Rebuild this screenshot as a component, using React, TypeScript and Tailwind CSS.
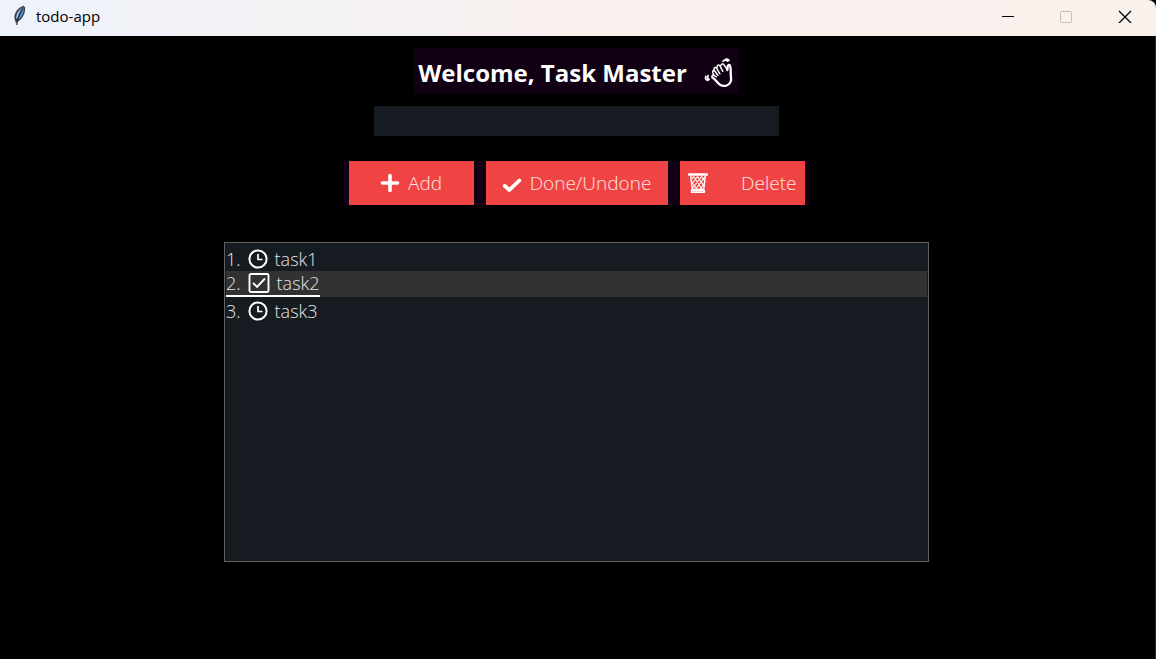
import { useState } from "react";

type Task = { name: string; done: boolean };

function FeatherIcon() {
  return (
    <svg width="16" height="22" viewBox="0 0 16 22" aria-hidden="true">
      <path d="M4 18.500 2.400 13C2.200 8 5.600 2.800 11.400.8l1.700 1.500c.3 5.500-1.800 10.800-6.200 13.600L5 17z" fill="#3a3f47" />
      <path d="M4.200 13.500C3.800 9.300 6.500 4.600 11 2.200L8.600 7.500 5.500 13.500z" fill="#9fc0e4" />
      <path d="M6 14.200 9 7.500l2.900-5c.3 4.600-1.500 9-5 11.700z" fill="#4a8ade" />
      <path d="M10.500 3.200C7.500 8 5.700 12.500 4.800 20" fill="none" stroke="#22262d" strokeWidth="1.200" />
    </svg>
  );
}

function WavingHand() {
  return (
    <svg width="32" height="32" viewBox="0 0 32 32" fill="none" stroke="#fff" strokeLinecap="round" strokeLinejoin="round" aria-hidden="true">
      <path d="M9.500 20.500c2.800 1.500 4.300 5 7.500 7.200 3.700 2.300 8.300 1.300 10.300-2.200 1.900-3.500.2-6.500.4-9.500.1-2.800.3-5-.7-7.200-.7-1.300-2.400-.9-2.400.7l-.2 3.500" strokeWidth="2.300" />
      <path d="M9.500 20.500c-1.300-1.200-.2-3 1.500-2.200l2.300 1.500M11 18.300l-1.300-2.800c-.6-1.700 1.300-2.500 2.300-1.200l2.800 4M11.200 13.800l-.2-1.500c-.2-2 1.900-2.500 2.700-1l3.200 5.500M13.900 11.500l.3-2.300c.4-1.600 2.300-1.500 2.900-.1l2.700 5.200M17.300 9.300l1-1.700c.9-1.100 2.400-.7 2.900.5l3.200 4.700" strokeWidth="1.500" />
      <path d="M20 4.300c1.200-1.500 3.300-1.500 4.700-.2M22 2.700c1.400-.8 2.900-.4 3.900.7M2.800 19.500c-.8 1.700 0 3.300 1.900 3.900M5 18.600c-.9 1.700-.4 3.100 1.100 4" strokeWidth="1.700" />
    </svg>
  );
}

function PlusIcon() {
  return (
    <svg width="20" height="20" viewBox="0 0 20 20" aria-hidden="true">
      <path d="M10 2.500v15M2.500 10h15" stroke="#fff" strokeWidth="3.600" strokeLinecap="round" />
    </svg>
  );
}

function CheckIcon() {
  return (
    <svg width="20" height="20" viewBox="0 0 20 20" aria-hidden="true">
      <path d="m2.800 12.800 4.600 4.200L17.300 7.500" fill="none" stroke="#fff" strokeWidth="3.800" strokeLinecap="round" strokeLinejoin="round" />
    </svg>
  );
}

function BasketIcon() {
  return (
    <svg width="20" height="22" viewBox="0 0 20 22" fill="none" stroke="#fff" strokeLinecap="round" strokeLinejoin="round" aria-hidden="true">
      <path d="M.8 1.800h18.400v1.400H.8z" strokeWidth="1.300" />
      <path d="m2.800 4.500 1.500 13h11.400l1.500-13M3.500 18.500h13v1.800h-13z" strokeWidth="1.400" />
      <path d="m3 8 2.600-3.500 8.600 13M3.500 12.500l6-8 6.500 9.500M4 17l9.500-12.500L17 9.500M7.500 17.500 16.800 5M12 17.500l4.300-6M3.300 9l5.500 8.500" strokeWidth="1.100" />
    </svg>
  );
}

function ClockIcon() {
  return (
    <svg width="20" height="20" viewBox="0 0 20 20" fill="none" stroke="#fff" aria-hidden="true">
      <circle cx="10" cy="10" r="8.600" strokeWidth="2" />
      <path d="M10 5v5.500h4.500" strokeWidth="1.700" />
    </svg>
  );
}

function TickedBoxIcon() {
  return (
    <svg width="22" height="20" viewBox="0 0 22 20" fill="none" stroke="#fff" strokeWidth="1.900" aria-hidden="true">
      <rect x="1.500" y="1" width="19" height="18" rx="1.500" />
      <path d="m5 9.800 4 4 8-8.300" />
    </svg>
  );
}

function TitleBar() {
  return (
    <header className="flex h-9 shrink-0 items-center justify-between rounded-tr-lg bg-linear-to-r from-[#eef3fb] via-[#f9f1ee] via-50% to-[#f9f1ec] pr-px pb-1">
      <div className="flex items-center gap-2 pl-3 text-[15px] leading-5 text-black">
        <FeatherIcon />
        <span>todo-app</span>
      </div>
      <div className="flex h-full">
        <button type="button" aria-label="Minimize" className="grid w-[58px] place-items-center">
          <svg width="14" height="14" viewBox="0 0 14 14"><path d="M1 7.500h12" stroke="#000" /></svg>
        </button>
        <button type="button" aria-label="Maximize" disabled className="grid w-[58px] place-items-center">
          <svg width="14" height="14" viewBox="0 0 14 14"><rect x="1.500" y="2.500" width="11" height="11" rx="1" fill="none" stroke="#c4bfbc" /></svg>
        </button>
        <button type="button" aria-label="Close" className="grid w-[60px] place-items-center">
          <svg width="14" height="14" viewBox="0 0 14 14"><path d="m1 2 12 12M13 2 1 14" stroke="#000" strokeWidth="1.300" /></svg>
        </button>
      </div>
    </header>
  );
}

export default function App() {
  const [draft, setDraft] = useState("");
  const [selected, setSelected] = useState(1);
  const [tasks, setTasks] = useState<Task[]>([
    { name: "task1", done: false },
    { name: "task2", done: true },
    { name: "task3", done: false },
  ]);

  const add = () => {
    if (!draft.trim()) return;
    setTasks([...tasks, { name: draft.trim(), done: false }]);
    setDraft("");
  };
  const toggle = () => setTasks(tasks.map((t, i) => (i === selected ? { ...t, done: !t.done } : t)));
  const remove = () => setTasks(tasks.filter((_, i) => i !== selected));

  return (
    <div className="flex min-h-screen flex-col bg-black font-['Open_Sans','Noto_Sans',sans-serif]">
      <TitleBar />
      <main className="flex flex-1 flex-col items-center border-r border-[#2b2b2b] pt-3 pr-[18px] pl-4">
        <h1 className="flex h-[46px] items-center gap-4 bg-[#110014] px-1 pt-1 text-2xl font-bold text-white">
          Welcome, Task Master
          <WavingHand />
        </h1>
        <input
          aria-label="New task"
          value={draft}
          onChange={(e) => setDraft(e.target.value)}
          className="mt-3 h-[30px] w-full max-w-[405px] bg-[#161b22] px-1 text-lg font-light text-white outline-none"
        />
        <div className="mt-[25px] flex gap-3 bg-[#110014] px-[5px] text-[19px] font-light text-[#ffe4e2]">
          <button type="button" onClick={add} className="flex h-11 w-[125px] items-center justify-center gap-2 bg-[#f04444]">
            <PlusIcon />
            Add
          </button>
          <button type="button" onClick={toggle} className="flex h-11 w-[182px] items-center justify-center gap-2 bg-[#f04444]">
            <CheckIcon />
            Done/Undone
          </button>
          <button type="button" onClick={remove} className="flex h-11 w-[125px] items-center justify-between bg-[#f04444] px-2">
            <BasketIcon />
            Delete
          </button>
        </div>
        <ul role="listbox" aria-label="Tasks" className="mt-[37px] h-80 w-full max-w-[705px] overflow-y-auto border border-[#606060] bg-[#161b22] px-px py-0.5 text-lg font-light text-[#e6e6e6]">
          {tasks.map((task, i) => (
            <li
              key={i}
              role="option"
              aria-selected={i === selected}
              onClick={() => setSelected(i)}
              className={i === selected ? "flex h-[26px] bg-[#323232]" : "flex h-[26px]"}
            >
              <span className={i === selected ? "flex items-center gap-[7px] border-b-2 border-white" : "flex items-center gap-[7px] pt-px"}>
                <span>{i + 1}.</span>
                {task.done ? <TickedBoxIcon /> : <ClockIcon />}
                <span>{task.name}</span>
              </span>
            </li>
          ))}
        </ul>
      </main>
    </div>
  );
}
